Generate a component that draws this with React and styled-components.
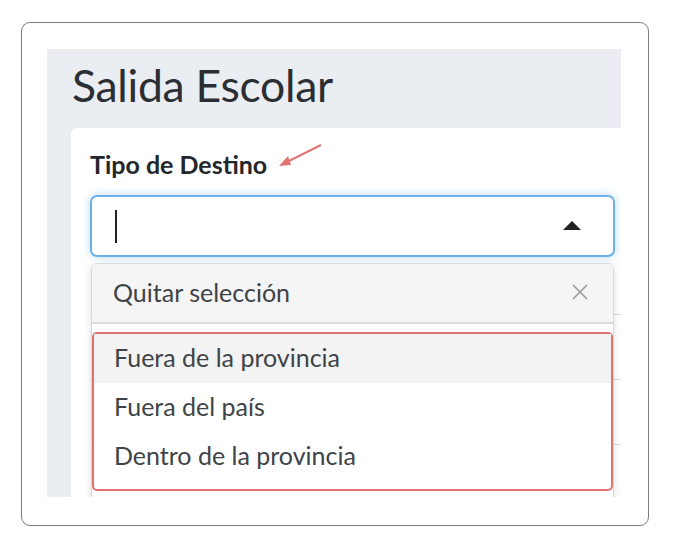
import React from 'react';
import styled, { createGlobalStyle } from 'styled-components';

const GlobalStyle = createGlobalStyle`
  body {
    margin: 0;
    background: #ffffff;
    font-family: Lato, "Open Sans", sans-serif;
  }
`

const options = ['Fuera de la provincia', 'Fuera del país', 'Dentro de la provincia'];

function App() {
    return (
        <>
            <GlobalStyle/>
            <StyledFrame>
                <StyledPanel>
                    <StyledTitle>Salida Escolar</StyledTitle>
                    <StyledCard>
                        <StyledLabel>
                            Tipo de Destino
                            <svg width="48" height="26" viewBox="0 0 48 26">
                                <path d="M46 2 L8 21" stroke="#e27474" strokeWidth="2" fill="none"/>
                                <path d="M4 23 L13 13 L16 22 Z" fill="#e27474"/>
                            </svg>
                        </StyledLabel>
                        <StyledSelectWrap>
                            <StyledSelect>
                                <span className='cursor'/>
                                <svg width="18" height="10" viewBox="0 0 18 10">
                                    <path d="M0 9 L9 0 L18 9 Z" fill="#222"/>
                                </svg>
                            </StyledSelect>
                            <StyledDropdown>
                                <StyledClearRow>
                                    Quitar selección
                                    <svg width="16" height="16" viewBox="0 0 16 16">
                                        <path d="M1 1 L15 15 M15 1 L1 15" stroke="#9a9a9a" strokeWidth="1.6"/>
                                    </svg>
                                </StyledClearRow>
                                <StyledMarked>
                                    {options.map((o, i) => (
                                        <StyledOption key={o} active={i === 0}>{o}</StyledOption>
                                    ))}
                                </StyledMarked>
                            </StyledDropdown>
                        </StyledSelectWrap>
                        <StyledTable>
                            <div className='row'><span/><span/></div>
                            <div className='row'><span/><span/></div>
                            <div className='row'><span/><span/></div>
                        </StyledTable>
                    </StyledCard>
                </StyledPanel>
            </StyledFrame>
        </>
    );
}

const StyledFrame = styled.div`
  box-sizing: border-box;
  margin: 22px 0 0 21px;
  width: 628px;
  height: 504px;
  border: 1px solid #7c7c7c;
  border-radius: 9px;
  padding: 26px 27px 28px 25px;
`

const StyledPanel = styled.div`
  height: 100%;
  background: #eaedf1;
  overflow: hidden;
  padding-left: 24px;
`

const StyledTitle = styled.h1`
  margin: 0 0 0 -24px;
  height: 79px;
  box-sizing: border-box;
  padding: 9px 0 0 25px;
  font-size: 44.5px;
  line-height: 54px;
  font-weight: 400;
  color: #2b2f33;
  letter-spacing: -0.3px;
`

const StyledCard = styled.div`
  width: 640px;
  height: 500px;
  background: #ffffff;
  border-radius: 6px;
  padding: 22px 0 0 19px;
  box-sizing: border-box;
`

const StyledLabel = styled.div`
  display: flex;
  align-items: flex-start;
  height: 28px;
  font-size: 25px;
  line-height: 28px;
  font-weight: 700;
  color: #23272b;
  svg {
    margin: -7px 0 0 8px;
  }
`

const StyledSelectWrap = styled.div`
  position: relative;
  margin-top: 17px;
  width: 525px;
`

const StyledSelect = styled.div`
  box-sizing: border-box;
  height: 62px;
  border: 2px solid #6cb0ea;
  border-radius: 7px;
  box-shadow: 0 0 8px rgba(102, 175, 233, 0.45);
  display: flex;
  align-items: center;
  justify-content: space-between;
  padding: 0 32px 0 23px;
  .cursor {
    width: 1.5px;
    height: 33px;
    background: #222;
  }
`

const StyledDropdown = styled.div`
  position: absolute;
  top: 68px;
  left: 1px;
  width: 523px;
  height: 260px;
  box-sizing: border-box;
  background: #ffffff;
  border: 1px solid #d9d9d9;
  border-radius: 6px;
  box-shadow: 0 3px 8px rgba(0, 0, 0, 0.12);
  overflow: hidden;
  z-index: 2;
`

const StyledClearRow = styled.div`
  height: 60px;
  box-sizing: border-box;
  background: #f5f5f5;
  border-bottom: 2px solid #dcdcdc;
  display: flex;
  align-items: center;
  justify-content: space-between;
  padding: 0 25px 2px 21px;
  font-size: 25px;
  color: #3e4347;
`

const StyledMarked = styled.div`
  margin-top: 8px;
  border: 2px solid #e07272;
  border-radius: 5px;
  padding-bottom: 8px;
`

const StyledOption = styled.div`
  height: 49px;
  box-sizing: border-box;
  display: flex;
  align-items: center;
  padding: 0 0 4px 20px;
  font-size: 25px;
  color: #3e4347;
  background: ${props => props.active ? '#f3f3f3' : '#ffffff'};
`

const StyledTable = styled.div`
  margin-top: 57px;
  .row {
    display: grid;
    grid-template-columns: 70px 1fr;
    height: 64px;
    border-top: 1px solid #d6d9dd;
    span + span {
      border-left: 1px solid #d6d9dd;
    }
  }
`

export default App;
